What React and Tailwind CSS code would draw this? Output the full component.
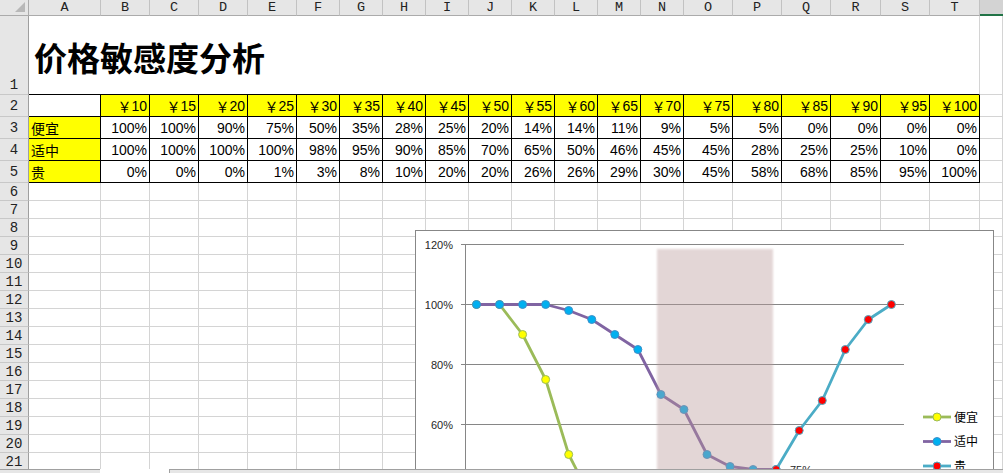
import React from "react";

const letters = "ABCDEFGHIJKLMNOPQRST".split("");
const prices = [10, 15, 20, 25, 30, 35, 40, 45, 50, 55, 60, 65, 70, 75, 80, 85, 90, 95, 100];
const cheap = [100, 100, 90, 75, 50, 35, 28, 25, 20, 14, 14, 11, 9, 5, 5, 0, 0, 0, 0];
const mid = [100, 100, 100, 100, 98, 95, 90, 85, 70, 65, 50, 46, 45, 45, 28, 25, 25, 10, 0];
const exp = [0, 0, 0, 1, 3, 8, 10, 20, 20, 26, 26, 29, 30, 45, 58, 68, 85, 95, 100];

const rowsData = [
  { label: "便宜", vals: cheap },
  { label: "适中", vals: mid },
  { label: "贵", vals: exp },
];

const FONT = "font-['Liberation_Sans','Noto_Sans_CJK_SC',sans-serif]";
const HFONT = "font-['Liberation_Mono','DejaVu_Sans_Mono',monospace]";

const gridCell = "border-r border-b border-[#d4d4d4]";
const tableCell = "border-r border-b border-black";

function RowHead({ n, align = "items-end", pad = "" }) {
  return (
    <div
      className={`bg-[#e6e6e6] border-r border-r-[#9f9f9f] border-b border-b-[#c8c8c8] flex justify-center ${align} ${pad} ${HFONT} text-[14px] leading-none text-[#222]`}
    >
      {n}
    </div>
  );
}

function Chart() {
  const xAt = (i) => 60.5 + 23.05 * i;
  const yAt = (v) => 73.5 + (100 - v) * 3;
  const pts = (arr) => arr.map((v, i) => `${xAt(i)},${yAt(v)}`).join(" ");
  const grid = [120, 100, 80, 60];
  const series = [
    { data: cheap, line: "#9bbb59", fill: "#ffff00", stroke: "#9bbb59" },
    { data: mid, line: "#8064a2", fill: "#00b0f0", stroke: "#3f8fc8" },
    { data: exp, line: "#4bacc6", fill: "#ff0000", stroke: "#4bacc6" },
  ];
  const legend = [
    { label: "便宜", y: 186, ...series[0] },
    { label: "适中", y: 210.5, ...series[1] },
    { label: "贵", y: 235, ...series[2] },
  ];
  return (
    <div className="absolute left-[415px] top-[230px] w-[579px] h-[330px] border border-[#878787] bg-white">
      <svg width="577" height="328" className={FONT}>
        <defs>
          <filter id="soft" x="-10%" y="-10%" width="120%" height="120%">
            <feGaussianBlur stdDeviation="1.2" />
          </filter>
        </defs>
        {grid.map((g) => (
          <g key={g}>
            <line x1="45" x2="488" y1={yAt(g)} y2={yAt(g)} stroke="#868686" strokeWidth="1" />
            <text x="37" y={yAt(g) + 4} textAnchor="end" fontSize="11" fill="#262626">
              {g}%
            </text>
          </g>
        ))}
        <line x1="45" x2="488" y1={yAt(40)} y2={yAt(40)} stroke="#868686" strokeWidth="1" />
        <line x1="49.5" x2="49.5" y1="13.5" y2="330" stroke="#868686" strokeWidth="1" />
        {series.map((s, k) => (
          <g key={k}>
            <polyline
              points={pts(s.data)}
              fill="none"
              stroke={s.line}
              strokeWidth="2.8"
              strokeLinejoin="round"
              strokeLinecap="round"
            />
            {s.data.map((v, i) => (
              <circle key={i} cx={xAt(i)} cy={yAt(v)} r="4" fill={s.fill} stroke={s.stroke} strokeWidth="1" />
            ))}
          </g>
        ))}
        <rect
          x="241"
          y="18"
          width="116"
          height="320"
          fill="rgb(186,154,154)"
          opacity="0.4"
          filter="url(#soft)"
        />
        <text x="374" y="243" fontSize="11" fill="#262626">
          75%
        </text>
        {legend.map((l) => (
          <g key={l.label}>
            <line x1="507" x2="535" y1={l.y} y2={l.y} stroke={l.line} strokeWidth="2.8" />
            <circle cx="521" cy={l.y} r="4" fill={l.fill} stroke={l.stroke} strokeWidth="1" />
            <text x="538" y={l.y + 4.5} fontSize="12" fill="#000">
              {l.label}
            </text>
          </g>
        ))}
      </svg>
    </div>
  );
}

export default function App() {
  const emptyRows = Array.from({ length: 16 }, (_, i) => i + 6);
  return (
    <div className={`w-[1003px] h-[473px] overflow-hidden bg-white flex flex-col ${FONT}`}>
      <div className="relative flex-1 overflow-hidden">
        <div className="grid grid-cols-[29px_72px_repeat(4,49px)_repeat(9,43px)_49px_49px_49px_50px_49px_50px_1fr] grid-rows-[16px_79px_repeat(4,22px)_repeat(16,18px)]">
          {/* column header */}
          <div className="bg-[#e6e6e6] border-r border-b border-[#ababab] relative">
            <svg width="28" height="15" className="absolute left-0 top-0">
              <polygon points="25,2 25,12 15,12" fill="#b8b8b8" />
            </svg>
          </div>
          {letters.map((l) => (
            <div
              key={l}
              className={`bg-[#e6e6e6] border-r border-r-[#c2c2c2] border-b border-b-[#ababab] flex items-center justify-center ${HFONT} text-[13.5px] leading-none text-[#222]`}
            >
              {l}
            </div>
          ))}
          <div className="bg-[#d3d3d3] border-b-2 border-b-[#217346]" />

          {/* row 1 */}
          <RowHead n={1} pad="pb-[2px]" />
          <div className="col-span-20 border-r border-r-[#d4d4d4] border-b border-b-black flex items-center pl-[5px] pt-[5px] overflow-visible">
            <span className="font-['Noto_Sans_CJK_SC',sans-serif] font-bold text-[33px] leading-none text-black whitespace-nowrap">
              价格敏感度分析
            </span>
          </div>
          <div className={gridCell} />

          {/* row 2 */}
          <RowHead n={2} align="items-center" />
          <div className={`${tableCell} bg-white`} />
          {prices.map((p) => (
            <div
              key={p}
              className={`${tableCell} bg-[#ffff00] flex items-center justify-end pr-[2px] text-[14px] leading-none text-black whitespace-nowrap`}
            >
              <span className="font-['Noto_Sans_CJK_SC',sans-serif]">￥</span>
              <span>{p}</span>
            </div>
          ))}
          <div className={gridCell} />

          {/* rows 3-5 */}
          {rowsData.map((r, ri) => (
            <React.Fragment key={r.label}>
              <RowHead n={ri + 3} align="items-center" />
              <div
                className={`${tableCell} bg-[#ffff00] flex items-center pl-[2px] text-[14px] leading-none text-black font-['Noto_Sans_CJK_SC',sans-serif]`}
              >
                {r.label}
              </div>
              {r.vals.map((v, i) => (
                <div
                  key={i}
                  className={`${tableCell} bg-white flex items-center justify-end pr-[2px] text-[14px] leading-none text-black`}
                >
                  {v}%
                </div>
              ))}
              <div className={gridCell} />
            </React.Fragment>
          ))}

          {/* empty rows */}
          {emptyRows.map((n) => (
            <React.Fragment key={n}>
              <RowHead n={n} pad="pb-[1px]" />
              {letters.map((l) => (
                <div key={l} className={gridCell} />
              ))}
              <div className={gridCell} />
            </React.Fragment>
          ))}
        </div>
        <Chart />
      </div>
      <div className="h-[4px] flex shrink-0">
        <div className="w-[100px] bg-[#e6e6e6] border-t border-t-[#a0a0a0]" />
        <div className="w-[69px] bg-white" />
        <div className="flex-1 bg-[#e6e6e6] border-t border-l border-[#a0a0a0]" />
      </div>
    </div>
  );
}
